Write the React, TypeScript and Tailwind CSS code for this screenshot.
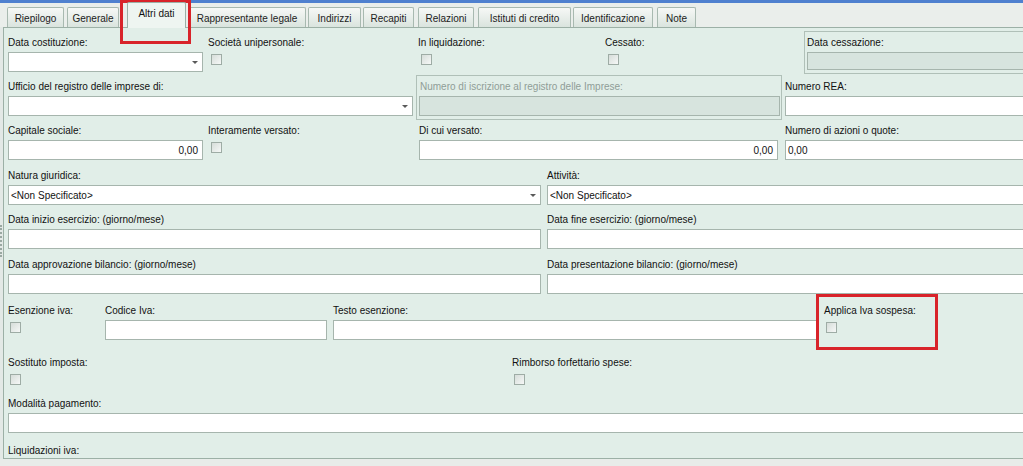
import React from 'react'

type Props = { className?: string; children?: React.ReactNode }

const tabs = [
  { label: 'Riepilogo', cls: 'ml-[7px] w-[57px]' },
  { label: 'Generale', cls: 'ml-[3px] w-[52px]' },
  { label: 'Altri dati', cls: 'ml-[8px] w-[59px]', active: true },
  { label: 'Rappresentante legale', cls: 'ml-[2px] w-[118px]' },
  { label: 'Indirizzi', cls: 'ml-[2px] w-[53px]' },
  { label: 'Recapiti', cls: 'ml-[2px] w-[51px]' },
  { label: 'Relazioni', cls: 'ml-[4px] w-[56px]' },
  { label: 'Istituti di credito', cls: 'ml-[4px] w-[93px]' },
  { label: 'Identificazione', cls: 'ml-[2px] w-[80px]' },
  { label: 'Note', cls: 'ml-[4px] w-[39px]' },
]

function Label({ children, dim }: { children: React.ReactNode; dim?: boolean }) {
  return (
    <div className={`h-[14px] whitespace-nowrap leading-[16px] ${dim ? 'text-[#8f9d97]' : 'text-[#111]'}`}>
      {children}
    </div>
  )
}

function Input({ className = '', children }: Props) {
  return (
    <div className={`mt-[3px] h-[20px] whitespace-nowrap border border-[#a6b5ad] bg-white px-[2px] leading-[19px] ${className}`}>
      {children}
    </div>
  )
}

function Combo({ className = '', children }: Props) {
  return (
    <div className={`mt-[3px] flex h-[20px] items-center whitespace-nowrap border border-[#a6b5ad] bg-white pl-[2px] pt-[1px] ${className}`}>
      <span>{children}</span>
      <span className="ml-auto mr-[4px] h-0 w-0 border-x-[3px] border-t-[3px] border-x-transparent border-t-[#5a5a5a]" />
    </div>
  )
}

function Check({ className = 'ml-[3px]' }: { className?: string }) {
  return (
    <div className={`mt-[5px] h-[11px] w-[11px] border border-[#9eaca5] bg-gradient-to-br from-[#d6ddd9] to-[#f6f8f7] ${className}`} />
  )
}

function Row({ className, children }: Props) {
  return <div className={`flex shrink-0 pt-[3px] ${className}`}>{children}</div>
}

export default function App() {
  return (
    <div className="relative h-[466px] w-[1023px] overflow-hidden bg-[#e8ece9] font-['Liberation_Sans',Arial,sans-serif] text-[10px] text-[#111]">
      {/* title bar remnant */}
      <div className="h-[3px] bg-[#4f80cf]" />

      {/* tab strip */}
      <div className="flex h-[24px] items-end bg-[#eaeeeb]">
        {tabs.map((t) =>
          t.active ? (
            <div
              key={t.label}
              className={`relative z-10 -mb-[1px] flex h-[26px] shrink-0 items-center justify-center rounded-t-[2px] border border-b-0 border-[#9cb0a6] bg-[#eef5f1] pb-[4px] ${t.cls}`}
            >
              {t.label}
            </div>
          ) : (
            <div
              key={t.label}
              className={`flex h-[20px] shrink-0 items-center justify-center rounded-t-[2px] border border-b-0 border-[#a8b9b0] bg-gradient-to-b from-[#f6f8f6] to-[#dae4de] pt-[2px] text-[#222] ${t.cls}`}
            >
              {t.label}
            </div>
          )
        )}
      </div>

      <div className="flex">
        {/* splitter strip */}
        <div className="flex w-[3px] shrink-0 flex-col items-start bg-[#e3e9e6]">
          <div className="mt-[198px] h-[32px] border-l-2 border-dotted border-[#9aa8a2]" />
        </div>

        {/* panel */}
        <div className="flex h-[432px] w-[1040px] shrink-0 flex-col overflow-hidden border-y border-l border-[#9cb0a6] bg-[#e1eee8] pl-[4px] pt-[4px]">
          <Row className="h-[44px]">
            <div className="w-[200px] shrink-0">
              <Label>Data costituzione:</Label>
              <Combo className="w-[195px]" />
            </div>
            <div className="w-[210px] shrink-0">
              <Label>Società unipersonale:</Label>
              <Check />
            </div>
            <div className="w-[187px] shrink-0">
              <Label>In liquidazione:</Label>
              <Check />
            </div>
            <div className="w-[199px] shrink-0">
              <Label>Cessato:</Label>
              <Check />
            </div>
            <div className="-mt-[4px] h-[43px] flex-1 border border-[#b0c0b8] pl-[2px] pt-[3px]">
              <Label>Data cessazione:</Label>
              <div className="mt-[3px] h-[18px] border border-[#a6b5ad] bg-[#d7e4de]" />
            </div>
          </Row>

          <Row className="h-[44px]">
            <div className="w-[408px] shrink-0">
              <Label>Ufficio del registro delle imprese di:</Label>
              <Combo className="w-[405px]" />
            </div>
            <div className="-mt-[4px] h-[45px] w-[366px] shrink-0 border border-[#b0c0b8] pt-[3px]">
              <div className="pl-[3px]">
                <Label dim>Numero di iscrizione al registro delle Imprese:</Label>
              </div>
              <div className="ml-[2px] mt-[3px] h-[20px] w-[361px] border border-[#a6b5ad] bg-[#d7e4de]" />
            </div>
            <div className="flex-1 pl-[3px]">
              <Label>Numero REA:</Label>
              <Input />
            </div>
          </Row>

          <Row className="h-[45px]">
            <div className="w-[200px] shrink-0">
              <Label>Capitale sociale:</Label>
              <Input className="w-[195px] pr-[4px] text-right">0,00</Input>
            </div>
            <div className="w-[211px] shrink-0">
              <Label>Interamente versato:</Label>
              <Check />
            </div>
            <div className="w-[366px] shrink-0">
              <Label>Di cui versato:</Label>
              <Input className="w-[359px] pr-[4px] text-right">0,00</Input>
            </div>
            <div className="flex-1">
              <Label>Numero di azioni o quote:</Label>
              <Input>0,00</Input>
            </div>
          </Row>

          <Row className="h-[44px]">
            <div className="w-[539px] shrink-0">
              <Label>Natura giuridica:</Label>
              <Combo className="w-[533px]">&lt;Non Specificato&gt;</Combo>
            </div>
            <div className="flex-1">
              <Label>Attività:</Label>
              <Combo>&lt;Non Specificato&gt;</Combo>
            </div>
          </Row>

          <Row className="h-[45px]">
            <div className="w-[539px] shrink-0">
              <Label>Data inizio esercizio: (giorno/mese)</Label>
              <Input className="w-[533px]" />
            </div>
            <div className="flex-1">
              <Label>Data fine esercizio: (giorno/mese)</Label>
              <Input />
            </div>
          </Row>

          <Row className="h-[46px]">
            <div className="w-[539px] shrink-0">
              <Label>Data approvazione bilancio: (giorno/mese)</Label>
              <Input className="w-[533px]" />
            </div>
            <div className="flex-1">
              <Label>Data presentazione bilancio: (giorno/mese)</Label>
              <Input />
            </div>
          </Row>

          <Row className="h-[52px]">
            <div className="w-[97px] shrink-0">
              <Label>Esenzione iva:</Label>
              <Check className="ml-[2px]" />
            </div>
            <div className="w-[228px] shrink-0">
              <Label>Codice Iva:</Label>
              <Input className="w-[222px]" />
            </div>
            <div className="w-[491px] shrink-0">
              <Label>Testo esenzione:</Label>
              <Input className="w-[484px]" />
            </div>
            <div className="flex-1">
              <Label>Applica Iva sospesa:</Label>
              <Check className="ml-[2px]" />
            </div>
          </Row>

          <Row className="h-[41px]">
            <div className="w-[504px] shrink-0">
              <Label>Sostituto imposta:</Label>
              <Check className="ml-[2px]" />
            </div>
            <div className="flex-1">
              <Label>Rimborso forfettario spese:</Label>
              <Check className="ml-[2px]" />
            </div>
          </Row>

          <Row className="h-[47px]">
            <div className="flex-1">
              <Label>Modalità pagamento:</Label>
              <Input />
            </div>
          </Row>

          <Row className="h-[20px]">
            <Label>Liquidazioni iva:</Label>
          </Row>
        </div>
      </div>

      {/* highlight boxes drawn over the screenshot */}
      <div className="absolute left-[120px] top-0 h-[44px] w-[71px] border-[3px] border-[#d8232a]" />
      <div className="absolute left-[816px] top-[294px] h-[56px] w-[122px] border-[3px] border-[#d8232a]" />
    </div>
  )
}
